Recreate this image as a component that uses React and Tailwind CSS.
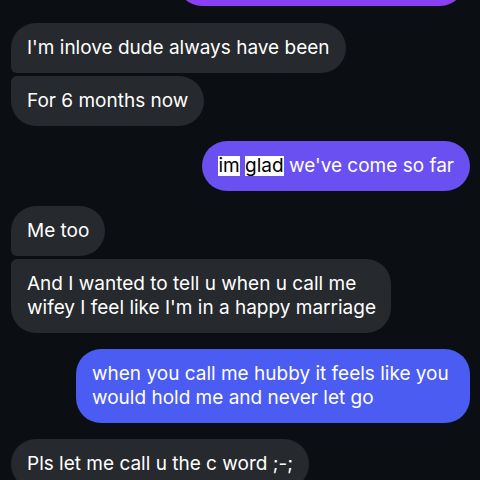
import React from 'react';

// message list: side, text lines, corner shape
const bubbleBase = 'shrink-0 whitespace-nowrap px-4 py-[13px] text-[19px] leading-[24px] text-white';

function Left({ children, className = '' }) {
  return <div className={`self-start bg-[#26292d] ${bubbleBase} ${className}`}>{children}</div>;
}

function Right({ children, className = '' }) {
  return <div className={`self-end ${bubbleBase} ${className}`}>{children}</div>;
}

export default function App() {
  return (
    <div
      className="w-[480px] h-[480px] overflow-hidden bg-[#0b0f13] flex flex-col pl-[11px] pr-[10px]"
      style={{ fontFamily: 'Inter, "Noto Sans", sans-serif' }}
    >
      {/* cut-off bubble at top */}
      <div className="shrink-0 self-end -mt-[44px] mr-[5px] h-[50px] w-[288px] rounded-[25px] bg-[#8a3ff5]" />

      <Left className="mt-[17px] rounded-[25px] rounded-bl-[6px]">I'm inlove dude always have been</Left>
      <Left className="mt-[3px] rounded-[25px] rounded-tl-[6px]">For 6 months now</Left>

      <Right className="mt-[15px] h-[50px] rounded-[26px] bg-[#6a4ff1]">
        <span className="inline-block bg-white leading-[20px] text-black">im</span>{' '}
        <span className="inline-block bg-white leading-[20px] text-black">glad</span> we've come so far
      </Right>

      <Left className="mt-[15px] rounded-[25px] rounded-bl-[6px]">Me too</Left>
      <Left className="mt-[3px] w-[380px] rounded-[25px] rounded-tl-[6px]">
        And I wanted to tell u when u call me
        <br />
        wifey I feel like I'm in a happy marriage
      </Left>

      <Right className="mt-[16px] w-[394px] rounded-[25px] bg-[#4a5cf2]">
        when you call me hubby it feels like you
        <br />
        would hold me and never let go
      </Right>

      <Left className="mt-[16px] rounded-[25px]">Pls let me call u the c word ;-;</Left>
    </div>
  );
}
